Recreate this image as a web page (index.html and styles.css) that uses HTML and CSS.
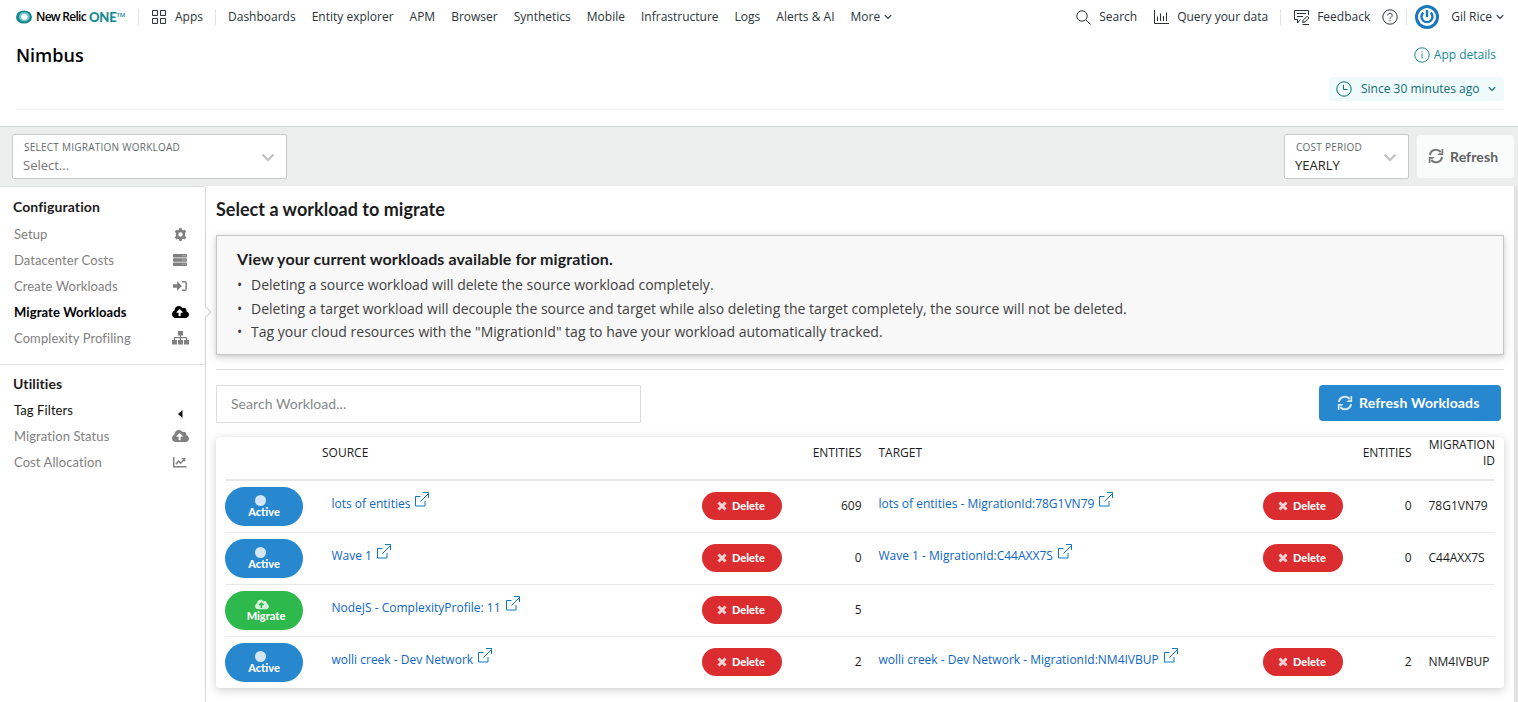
FILE: index.html
```html
<!DOCTYPE html>
<html lang="en">
<head>
<meta charset="utf-8">
<title>Nimbus</title>
<link rel="stylesheet" href="styles.css">
</head>
<body>
<svg class="defs" width="0" height="0">
  <symbol id="cloud" viewBox="0 0 640 512"><path d="M537.600 226.600c4.100-10.700 6.400-22.400 6.400-34.600 0-53-43-96-96-96-19.700 0-38.100 6-53.300 16.200C367 64.200 315.300 32 256 32c-88.400 0-160 71.600-160 160 0 2.700.1 5.400.2 8.100C40.200 219.800 0 273.200 0 336c0 79.500 64.500 144 144 144h368c70.700 0 128-57.300 128-128 0-61.900-44-113.600-102.400-125.400zM393.400 288H328v112c0 8.800-7.200 16-16 16h-48c-8.800 0-16-7.200-16-16V288h-65.400c-14.300 0-21.400-17.200-11.300-27.300l105.400-105.400c6.200-6.200 16.400-6.200 22.600 0l105.400 105.400c10.100 10.100 2.900 27.300-11.300 27.300z"/></symbol>
  <symbol id="chev" viewBox="0 0 8 6"><path d="M.8 1.200 4 4.400 7.200 1.200" fill="none" stroke="currentColor" stroke-width="1.200"/></symbol>
  <symbol id="bigchev" viewBox="0 0 14 9"><path d="M1.500 1.500 7 7l5.500-5.500" fill="none" stroke="currentColor" stroke-width="2.300"/></symbol>
  <symbol id="ext" viewBox="0 0 15 15"><path d="M5.500 4.500h-5v9.500h9.500V9M5.500 9.500l8.500-8.500M8 .5h5.500V6" fill="none" stroke="currentColor"/></symbol>
  <symbol id="cross" viewBox="0 0 10 10"><path d="M1.500 1.500l7 7M8.500 1.500l-7 7" fill="none" stroke="currentColor" stroke-width="2.900"/></symbol>
  <symbol id="sync" viewBox="0 0 16 16"><path d="M1.900 7a6.100 6.100 0 0 1 10.800-3M14.100 9a6.100 6.100 0 0 1-10.800 3" fill="none" stroke="currentColor" stroke-width="2"/><path d="M15.200.9v6H9.300l1.900-1.700h2.300V.9zM.8 15.100v-6h5.900l-1.900 1.700H2.500v4.300z" fill="currentColor"/></symbol>
</svg>

<header class="topbar">
  <div class="logo">
    <svg width="16" height="14" viewBox="0 0 16 14"><ellipse cx="8" cy="7" rx="8" ry="6.600" fill="#158a94"/><ellipse cx="8.300" cy="6.800" rx="5.200" ry="4.500" fill="#7fcbd0"/><ellipse cx="8.300" cy="6.800" rx="3.200" ry="2.900" fill="#fff"/></svg>
    <span class="brand">New Relic</span><span class="one">ONE</span><span class="tm">TM</span>
  </div>
  <i class="sep"></i>
  <div class="apps"><svg width="14" height="14" viewBox="0 0 14 14" fill="none" stroke="#293338"><path d="M.5.500h5v5h-5zM8.500.500h5v5h-5zM.5 8.500h5v5h-5zM8.500 8.500h5v5h-5z"/></svg><span>Apps</span></div>
  <i class="sep"></i>
  <nav class="nav">
    <a>Dashboards</a><a>Entity explorer</a><a>APM</a><a>Browser</a><a>Synthetics</a><a>Mobile</a><a>Infrastructure</a><a>Logs</a><a>Alerts &amp; AI</a><a>More <svg class="chev" width="8" height="6"><use href="#chev"/></svg></a>
  </nav>
  <div class="tools">
    <svg class="t-search" width="15" height="15" viewBox="0 0 15 15" fill="none" stroke="currentColor"><circle cx="6" cy="6" r="5.200"/><path d="M9.700 9.700l4.800 4.800"/></svg><span class="w-search">Search</span>
    <svg class="t-query" width="15" height="14" viewBox="0 0 15 14" fill="none" stroke="currentColor"><path d="M.5 0v13.500H15M3.500 11V6.500M6.500 11V3.500M9.500 11V6M12.500 11V2.500"/></svg><span class="w-query">Query your data</span>
    <i class="sep"></i>
    <svg class="t-feed" width="16" height="16" viewBox="0 0 16 16" fill="none" stroke="currentColor"><path d="M14.500 6V1.500H.5v9h3v3.500l3-3.500M3 4.500h9M3 7.500h6M8.500 13.500l.6-2.300 4-4 1.800 1.800-4 4zM8.500 15.500H15"/></svg><span class="w-feed">Feedback</span>
    <svg class="t-help" width="16" height="16" viewBox="0 0 16 16" fill="none" stroke="currentColor"><circle cx="8" cy="8" r="7.200"/><path d="M5.800 6.400a2.200 2.200 0 1 1 3.400 1.800C8.400 8.700 8 9 8 9.900M8 11v1.300"/></svg>
    <i class="sep s3"></i>
    <svg class="avatar" width="24" height="24" viewBox="0 0 24 24"><circle cx="12" cy="12" r="12" fill="#1878b9"/><circle cx="12" cy="12" r="9" fill="#fff"/><path d="M8.300 7.600a5.500 5.500 0 1 0 7.400 0" fill="none" stroke="#1878b9" stroke-width="2.400"/><path d="M10.800 5h2.400v7h-2.400z" fill="#1878b9"/></svg>
    <span class="w-user">Gil Rice</span><svg class="chev" width="8" height="6"><use href="#chev"/></svg>
  </div>
</header>

<section class="titlebar">
  <h1>Nimbus</h1>
  <div class="title-actions">
    <a class="details"><svg width="16" height="16" viewBox="0 0 16 16" fill="none" stroke="currentColor"><circle cx="8" cy="8" r="7.200"/><path d="M8 6.500V11.500M8 4v1.200"/></svg>App details</a>
    <a class="since"><svg width="16" height="16" viewBox="0 0 16 16" fill="none" stroke="currentColor"><circle cx="8" cy="8" r="7.200"/><path d="M7.500 4v4.500H11.500"/></svg><span>Since 30 minutes ago</span><svg class="chev" width="8" height="6"><use href="#chev"/></svg></a>
  </div>
</section>

<section class="toolbar">
  <div class="select wide"><div><label>SELECT MIGRATION WORKLOAD</label><span class="placeholder">Select...</span></div><svg width="14" height="9"><use href="#bigchev"/></svg></div>
  <div class="select narrow"><div><label>COST PERIOD</label><span>YEARLY</span></div><svg width="14" height="9"><use href="#bigchev"/></svg></div>
  <button class="refresh"><svg width="16" height="16"><use href="#sync"/></svg>Refresh</button>
</section>

<div class="body">
  <aside class="sidebar">
    <div class="group">
      <h2>Configuration</h2>
      <a>Setup <svg width="13" height="13" viewBox="0 0 12 12"><path fill-rule="evenodd" d="M4.900 0h2.200l.3 1.600 1 .5L10 1.500l1.300 2-1.200 1.100a4 4 0 0 1 0 2.800l1.200 1.100-1.300 2-1.600-.6-1 .5L7.100 12H4.900l-.3-1.600-1-.5-1.600.6-1.300-2 1.200-1.100a4 4 0 0 1 0-2.800L.7 3.500l1.300-2 1.600.6 1-.5zM6 4a2 2 0 1 0 0 4 2 2 0 0 0 0-4z"/></svg></a>
      <a>Datacenter Costs <svg width="14" height="12" viewBox="0 0 14 12"><path fill-rule="evenodd" d="M.7 0h12.600q.7 0 .7.700v2.100q0 .7-.7.700H.7Q0 3.500 0 2.800V.7Q0 0 .7 0zM.7 4.200h12.600q.7 0 .7.700v2.100q0 .7-.7.700H.7Q0 7.700 0 7V4.900q0-.7.700-.7zM.7 8.400h12.600q.7 0 .7.700v2.100q0 .7-.7.700H.7q-.7 0-.7-.7V9.100q0-.7.700-.7zM9.500 1.300v.9h.8v-.9zM11.700 1.300v.9h.8v-.9zM9.500 5.500v.9h.8v-.9zM11.700 5.500v.9h.8v-.9zM9.500 9.700v.9h.8v-.9zM11.700 9.700v.9h.8v-.9z"/></svg></a>
      <a>Create Workloads <svg width="14" height="10" viewBox="0 0 14 10"><path d="M0 3.300h4V.2L9 5 4 9.800V6.700H0z"/><path d="M9 .8h2.700q1.500 0 1.500 1.500v5.400q0 1.500-1.500 1.500H9" fill="none" stroke="currentColor" stroke-width="1.500"/></svg></a>
      <a class="active">Migrate Workloads <svg width="17" height="14"><use href="#cloud"/></svg></a>
      <a>Complexity Profiling <svg width="17" height="14" viewBox="0 0 17 14"><path d="M6 0h5v4.500H6zM0 9h5v4.500H0zM6 9h5v4.500H6zM12 9h5v4.500h-5z"/><path d="M8.500 4v5M2.500 9V6.700h12V9" fill="none" stroke="currentColor" stroke-width="1.200"/></svg></a>
    </div>
    <div class="group">
      <h2>Utilities</h2>
      <a class="dark">Tag Filters <svg class="caret" width="5" height="8" viewBox="0 0 5 8"><path d="M0 4 4.500 0v8z"/></svg></a>
      <a>Migration Status <svg width="17" height="14"><use href="#cloud"/></svg></a>
      <a>Cost Allocation <svg width="14" height="11" viewBox="0 0 14 11"><path d="M.7 0v9.700H13.500M2.800 7.200l2.800-3 2 2 3.300-3.500" fill="none" stroke="currentColor" stroke-width="1.500"/><path d="M8.300 1h4v4z"/></svg></a>
    </div>
  </aside>

  <main class="content">
    <h2 class="page-title">Select a workload to migrate</h2>
    <div class="notice">
      <h3>View your current workloads available for migration.</h3>
      <ul>
        <li>Deleting a source workload will delete the source workload completely.</li>
        <li>Deleting a target workload will decouple the source and target while also deleting the target completely, the source will not be deleted.</li>
        <li>Tag your cloud resources with the "MigrationId" tag to have your workload automatically tracked.</li>
      </ul>
    </div>
    <div class="actions">
      <div class="search">Search Workload...</div>
      <button class="primary"><svg width="16" height="16"><use href="#sync"/></svg>Refresh Workloads</button>
    </div>
    <div class="card">
      <div class="row head"><span></span><span>SOURCE</span><span></span><span class="num">ENTITIES</span><span class="target">TARGET</span><span></span><span class="num">ENTITIES</span><span class="mid">MIGRATION ID</span></div>
      <div class="row"><b class="pill"><i class="dot"></i>Active</b><a class="src">lots of entities<svg width="15" height="15"><use href="#ext"/></svg></a><button class="del"><svg width="10" height="10"><use href="#cross"/></svg>Delete</button><span class="num">609</span><a class="target">lots of entities - MigrationId:78G1VN79<svg width="15" height="15"><use href="#ext"/></svg></a><button class="del"><svg width="10" height="10"><use href="#cross"/></svg>Delete</button><span class="num">0</span><span class="mid">78G1VN79</span></div>
      <div class="row"><b class="pill"><i class="dot"></i>Active</b><a class="src">Wave 1<svg width="15" height="15"><use href="#ext"/></svg></a><button class="del"><svg width="10" height="10"><use href="#cross"/></svg>Delete</button><span class="num">0</span><a class="target">Wave 1 - MigrationId:C44AXX7S<svg width="15" height="15"><use href="#ext"/></svg></a><button class="del"><svg width="10" height="10"><use href="#cross"/></svg>Delete</button><span class="num">0</span><span class="mid">C44AXX7S</span></div>
      <div class="row"><b class="pill green"><svg width="14" height="11"><use href="#cloud"/></svg>Migrate</b><a class="src">NodeJS - ComplexityProfile: 11<svg width="15" height="15"><use href="#ext"/></svg></a><button class="del"><svg width="10" height="10"><use href="#cross"/></svg>Delete</button><span class="num">5</span></div>
      <div class="row"><b class="pill"><i class="dot"></i>Active</b><a class="src">wolli creek - Dev Network<svg width="15" height="15"><use href="#ext"/></svg></a><button class="del"><svg width="10" height="10"><use href="#cross"/></svg>Delete</button><span class="num">2</span><a class="target">wolli creek - Dev Network - MigrationId:NM4IVBUP<svg width="15" height="15"><use href="#ext"/></svg></a><button class="del"><svg width="10" height="10"><use href="#cross"/></svg>Delete</button><span class="num">2</span><span class="mid">NM4IVBUP</span></div>
    </div>
  </main>
  <div class="scrollbar"></div>
</div>
</body>
</html>
```

FILE: styles.css
```css
* { box-sizing: border-box; }
body { margin: 0; height: 702px; overflow: hidden; display: flex; flex-direction: column; background: #fff; font: 12px/16px "Open Sans", "Noto Sans", sans-serif; color: #293338; }
h1, h2, h3, ul { margin: 0; padding: 0; }
button { border: 0; margin: 0; padding: 0; }
svg { flex: none; display: block; }
.defs { display: none; }

.topbar { height: 34px; flex: none; display: flex; align-items: center; padding-left: 16px; white-space: nowrap; }
.sep { width: 1px; height: 16px; background: #dfe2e2; flex: none; }
.logo { display: flex; align-items: center; width: 122px; }
.brand { font-weight: 600; color: #000; margin-left: 4px; width: 53px; letter-spacing: -.72px; }
.one { font-family: Lato, sans-serif; font-weight: 900; color: #158a94; font-size: 13px; letter-spacing: -.2px; }
.tm { font-size: 6px; font-weight: 600; color: #158a94; line-height: 6px; margin-bottom: 5px; }
.apps { display: flex; align-items: center; margin-left: 13px; width: 63px; }
.apps span { margin-left: 9px; }
.nav { display: flex; gap: 16px; margin-left: 12px; }
.nav a { display: flex; align-items: center; }
.nav .chev { margin-left: 4px; }
.tools { display: flex; align-items: center; margin-left: auto; padding-right: 14px; }
.w-search { margin-left: 8px; width: 55px; }
.w-query { margin-left: 8px; width: 103px; }
.t-feed { margin-left: 13px; }
.w-feed { margin-left: 7px; width: 65px; }
.s3 { margin-left: 8px; }
.avatar { margin: 0 12px 0 8px; }
.tools .chev { margin-left: 4px; }

.titlebar { height: 76px; flex: none; display: flex; justify-content: space-between; margin: 0 14px 0 16px; border-bottom: 1px solid #eceeee; }
h1 { font-size: 18px; line-height: 24px; font-weight: 600; color: #000; padding-top: 9px; }
.title-actions { display: flex; flex-direction: column; align-items: flex-end; padding-top: 13px; }
.details { display: flex; align-items: center; gap: 4px; color: #158a94; margin-right: 8px; }
.since { display: flex; align-items: center; margin-top: 14px; height: 24px; width: 175px; padding-left: 7px; border-radius: 4px; background: #effafb; color: #0f6c75; }
.since span { margin: 0 8px 0 9px; }

.toolbar { flex: none; height: 60px; margin-top: 16px; border-top: 1px solid #d0d4d4; background: #eceeee; display: flex; padding: 7px 4px 0 12px; }
.select { height: 45px; border: 1px solid #c6caca; border-radius: 2px; background: #fff; display: flex; justify-content: space-between; align-items: center; padding: 0 11px 0 10px; color: #c3c5c5; }
.select > svg { margin-top: 2px; }
.select > div { display: flex; flex-direction: column; }
.select label { font-size: 10px; line-height: 16px; letter-spacing: .25px; color: #5e6c6c; padding-left: 1px; }
.select span { font-size: 13px; line-height: 20px; color: #222; }
.select .placeholder { color: #777; }
.wide { width: 275px; }
.narrow { width: 125px; margin-left: auto; }
.refresh { width: 97px; height: 43px; margin: 1px 0 0 8px; border-radius: 4px; background: #fafbfb; display: flex; align-items: center; padding: 0 0 1px 11px; gap: 6px; font: 700 14px Lato, sans-serif; letter-spacing: .1px; color: #606060; }
.refresh svg { color: #777; }

.body { display: flex; flex: 1; min-height: 0; }
.sidebar { width: 206px; flex: none; border-right: 1px solid #d4d4d5; border-top: 1px solid #dcdede; border-top-right-radius: 3px; font-family: Lato, sans-serif; }
.group { padding: 11px 0 12px; border-bottom: 1px solid #e3e4e4; height: 178px; }
.group + .group { border: 0; padding-top: 10px; }
.group h2 { font-size: 14px; line-height: 18px; letter-spacing: .1px; padding-left: 13px; color: #1b1c1d; margin-bottom: 5px; }
.group + .group h2 { margin-bottom: 4px; }
.group a { display: grid; grid-template-columns: 1fr 18px; align-items: center; justify-items: start; height: 26px; padding: 0 16px 0 14px; font-size: 13px; letter-spacing: .09px; color: #7f7f7f; fill: currentColor; position: relative; }
.group a svg { justify-self: center; color: #808080; }
.group a.active { font-weight: 700; color: #000; }
.group a.active svg { color: #000; }
.group a.dark, .group a.dark svg { color: #111; }
.group .caret { margin-top: 8px; }
.active::after { content: ""; position: absolute; right: -5px; top: 9px; width: 7px; height: 7px; background: #fff; border: solid #d4d4d5; border-width: 1px 1px 0 0; transform: rotate(45deg); }

.content { flex: 1; padding: 0 10px; min-width: 0; background: #fff; }
.scrollbar { width: 4px; background: #e3e3e3; }
.page-title { font: 700 18px/24px Lato, sans-serif; color: #1b1c1d; padding-top: 11px; letter-spacing: .02px; }
.notice { margin-top: 14px; height: 120px; border: 1px solid #c4c5c6; background: #f8f8f8; box-shadow: 0 2px 4px rgba(34,36,38,.12), 0 2px 10px rgba(34,36,38,.15); padding: 12px 20px; }
.notice h3 { font: 700 16px/22px Lato, sans-serif; letter-spacing: .1px; color: #1b1c1d; }
.notice ul { list-style: none; margin-top: 3px; }
.notice li { font-size: 14px; line-height: 23.500px; color: #3f4041; display: flex; }
.notice li::before { content: "•"; width: 14px; font-size: 14px; }
.actions { display: flex; justify-content: space-between; margin-top: 14px; border-top: 1px solid #dedede; padding: 15px 3px 0 0; height: 68px; }
.search { width: 425px; height: 38px; border: 1px solid #dcdcdd; font: 14px/36px Lato, sans-serif; letter-spacing: .05px; padding-left: 14px; color: #838989; }
.primary { width: 182px; height: 36px; border-radius: 4px; background: #2888cf; color: #fff; display: flex; align-items: center; padding: 0 0 1px 18px; gap: 6px; font: 700 14px Lato, sans-serif; letter-spacing: .14px; }
.primary svg { opacity: .8; }

.card { height: 251px; border-radius: 4px; background: #fff; box-shadow: 0 2px 10px rgba(0,0,0,.2); padding: 0 9px; }
.row { display: grid; grid-template-columns: 97px 380px 80px 79.500px 401.500px 80px 68.500px 83.500px; height: 52px; align-items: center; border-bottom: 1px solid #e8e8e8; color: #1b1c1d; }
.row:last-child { border: 0; height: 51px; }
.head { height: 44px; border-bottom: 2px solid #e8e8e8; align-items: start; padding-top: 8px; }
.num { text-align: right; }
.row .num, .row:not(.head) .mid { margin-top: -1px; }
.row.head .num { margin-top: 0; }
.target { padding-left: 17px; }
.mid { padding-left: 17px; }
.head .mid { text-align: right; margin-top: -8px; }
.row a { color: #0d66c4; display: flex; align-items: center; margin-top: -5px; }
.row a svg { margin: -10px 0 0 5px; color: #0d78c0; }
.src { padding-left: 9.500px; }
.pill { width: 78px; height: 39px; border-radius: 20px; background: #2888cf; color: #fff; font: 900 11px/12px Lato, sans-serif; display: flex; flex-direction: column; align-items: center; padding-top: 8px; fill: currentColor; }
.pill .dot { width: 11px; height: 11px; border-radius: 50%; background: #d2e6f5; margin: 0 7px 0 0; }
.green { background: #2eb94c; padding-left: 4px; }
.green svg { opacity: .8; margin-right: 8px; }
.del { width: 80px; height: 28px; margin-top: -1px; border-radius: 14px; background: #db2c30; color: #fff; font: 900 11px Lato, sans-serif; display: flex; align-items: center; padding: 0 0 1px 15px; gap: 5px; }
.del svg { opacity: .8; }
```
